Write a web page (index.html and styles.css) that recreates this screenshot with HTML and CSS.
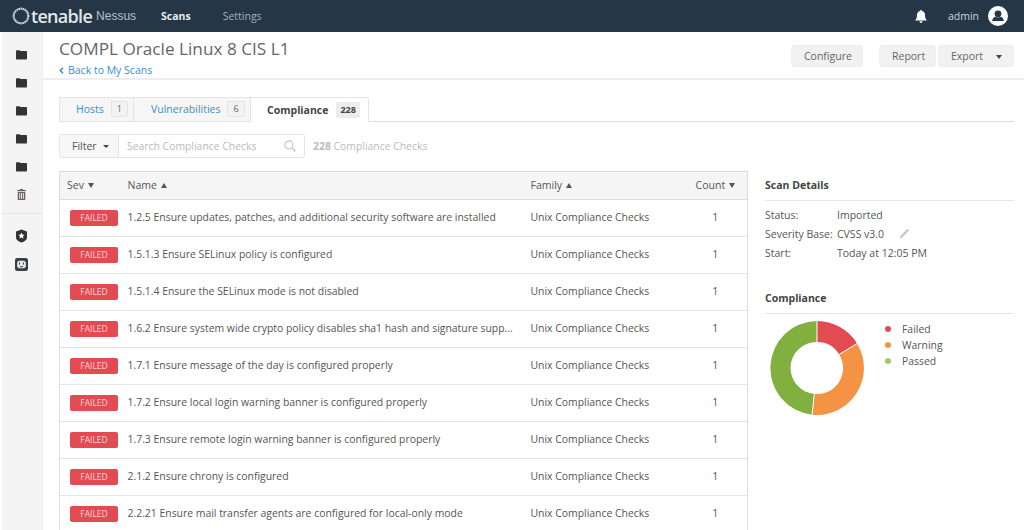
FILE: index.html
```html
<!DOCTYPE html>
<html lang="en">
<head>
	<meta charset="UTF-8">
	<title>Nessus - COMPL Oracle Linux 8 CIS L1</title>
	<link rel="stylesheet" href="styles.css">
</head>
<body>
<header class="topbar">
	<div class="logo">
		<svg class="logo-ring" width="18" height="18" viewBox="0 0 18 18"><circle cx="9" cy="9" r="7.300" fill="none" stroke="#d5dade" stroke-width="2.200" stroke-dasharray="1.600 .5"/></svg>
		<span class="logo-word">tenable</span>
		<span class="logo-prod">Nessus</span>
	</div>
	<nav class="topnav">
		<a class="topnav-on">Scans</a>
		<a>Settings</a>
	</nav>
	<div class="topright">
		<svg class="bell" width="12" height="13" viewBox="0 0 12 13"><path d="M6 0c.6 0 1 .4 1 1 2 .4 3 2 3 4 0 3 .6 4 2 5.500H0C1.400 9 2 8 2 5c0-2 1-3.600 3-4 0-.6.400-1 1-1zM4.500 11.300h3C7.500 12.300 6.800 13 6 13s-1.500-.7-1.500-1.700z" fill="#fff"/></svg>
		<span class="username">admin</span>
		<svg class="avatar" width="20" height="20" viewBox="0 0 20 20"><circle cx="10" cy="10" r="10" fill="#fff"/><circle cx="10" cy="7.800" r="3.400" fill="#253746"/><path d="M4.200 15c0-2.800 2-4 3.500-4.200.7.500 1.500.8 2.300.8s1.600-.3 2.300-.8c1.500.2 3.500 1.400 3.500 4.200z" fill="#253746"/></svg>
	</div>
</header>
<div class="shell">
	<aside class="sidebar">
		<div class="side-group">
			<svg class="side-ico" viewBox="0 0 11 10"><path d="M0 1.500C0 1 .4.700 1 .7h2.600l.8.900H10c.6 0 1 .4 1 .9V9c0 .6-.4 1-1 1H1c-.6 0-1-.4-1-1z" fill="#333"/></svg>
			<svg class="side-ico" viewBox="0 0 11 10"><path d="M0 1.500C0 1 .4.700 1 .7h2.600l.8.900H10c.6 0 1 .4 1 .9V9c0 .6-.4 1-1 1H1c-.6 0-1-.4-1-1z" fill="#333"/></svg>
			<svg class="side-ico" viewBox="0 0 11 10"><path d="M0 1.500C0 1 .4.700 1 .7h2.600l.8.900H10c.6 0 1 .4 1 .9V9c0 .6-.4 1-1 1H1c-.6 0-1-.4-1-1z" fill="#333"/></svg>
			<svg class="side-ico" viewBox="0 0 11 10"><path d="M0 1.500C0 1 .4.700 1 .7h2.600l.8.900H10c.6 0 1 .4 1 .9V9c0 .6-.4 1-1 1H1c-.6 0-1-.4-1-1z" fill="#333"/></svg>
			<svg class="side-ico" viewBox="0 0 11 10"><path d="M0 1.500C0 1 .4.700 1 .7h2.600l.8.900H10c.6 0 1 .4 1 .9V9c0 .6-.4 1-1 1H1c-.6 0-1-.4-1-1z" fill="#333"/></svg>
			<svg class="side-ico" viewBox="0 0 9 11"><path d="M3 0h3l.5 1H9v1H0V1h2.500zM.7 2.800h7.600V10c0 .6-.4 1-1 1H1.700c-.6 0-1-.4-1-1zm1.600 1.200v5.800h.9V4zm1.800 0v5.800h.9V4zm1.800 0v5.800h.9V4z" fill="#6b6461"/></svg>
		</div>
		<div class="side-group side-group-low">
			<svg class="side-ico side-ico-shield" viewBox="0 0 11 13"><path d="M5.500 0L11 2v6c0 2.500-2.500 4-5.500 5C2.500 12 0 10.500 0 8V2z" fill="#333"/><path d="M5.500 3.200l.9 1.900 2.100.3-1.500 1.400.4 2.100-1.900-1-1.900 1 .4-2.100-1.500-1.400 2.100-.3z" fill="#fff"/></svg>
			<svg class="side-ico side-ico-plug" viewBox="0 0 12 12"><rect width="12" height="12" rx="2" fill="#3a3f45"/><path d="M3.500 2.500h5L10 4v4L8.500 9.500h-5L2 8V4z" fill="#e8e8e8"/><path d="M4.200 4.200v1.800M7.800 4.200v1.800M4.500 8h3" stroke="#3a3f45" stroke-width="1"/></svg>
		</div>
	</aside>
	<main class="main">
		<div class="pagehead">
			<div>
				<h1 class="pagetitle">COMPL Oracle Linux 8 CIS L1</h1>
				<a class="backlink"><svg class="backlink-arrow" width="5" height="7" viewBox="0 0 5 7"><path d="M4 .8L1.300 3.500 4 6.200" fill="none" stroke="#3a8fc9" stroke-width="1.500"/></svg>Back to My Scans</a>
			</div>
			<div class="pageactions">
				<button class="btn btn-configure">Configure</button>
				<button class="btn btn-report">Report</button>
				<button class="btn btn-export">Export <i class="caret"></i></button>
			</div>
		</div>
		<div class="content">
			<div class="tabs">
				<a class="tab tab-hosts">Hosts <span class="tabcount">1</span></a>
				<a class="tab tab-vulns">Vulnerabilities <span class="tabcount">6</span></a>
				<a class="tab tab-on">Compliance <span class="tabcount">228</span></a>
			</div>
			<div class="filterbar">
				<div class="filterbtn">Filter <i class="caret"></i></div>
				<div class="searchbox">
					<span>Search Compliance Checks</span>
					<svg width="12" height="12" viewBox="0 0 13 13"><circle cx="5.300" cy="5.300" r="4.300" fill="none" stroke="#c4c4c4" stroke-width="1.200"/><path d="M8.500 8.500L12.300 12.300" stroke="#c4c4c4" stroke-width="1.600"/></svg>
				</div>
				<div class="resultcount"><b>228</b> Compliance Checks</div>
			</div>
			<div class="columns">
				<table class="checks">
					<thead>
						<tr>
							<th class="col-sev">Sev <i class="sort sort-down"></i></th>
							<th class="col-name">Name <i class="sort sort-up"></i></th>
							<th class="col-family">Family <i class="sort sort-up"></i></th>
							<th class="col-count">Count <i class="sort sort-down"></i></th>
						</tr>
					</thead>
					<tbody>
						<tr><td><span class="failed">FAILED</span></td><td class="name">1.2.5 Ensure updates, patches, and additional security software are installed</td><td class="name">Unix Compliance Checks</td><td class="num">1</td></tr>
						<tr><td><span class="failed">FAILED</span></td><td class="name">1.5.1.3 Ensure SELinux policy is configured</td><td class="name">Unix Compliance Checks</td><td class="num">1</td></tr>
						<tr><td><span class="failed">FAILED</span></td><td class="name">1.5.1.4 Ensure the SELinux mode is not disabled</td><td class="name">Unix Compliance Checks</td><td class="num">1</td></tr>
						<tr><td><span class="failed">FAILED</span></td><td class="name">1.6.2 Ensure system wide crypto policy disables sha1 hash and signature supp...</td><td class="name">Unix Compliance Checks</td><td class="num">1</td></tr>
						<tr><td><span class="failed">FAILED</span></td><td class="name">1.7.1 Ensure message of the day is configured properly</td><td class="name">Unix Compliance Checks</td><td class="num">1</td></tr>
						<tr><td><span class="failed">FAILED</span></td><td class="name">1.7.2 Ensure local login warning banner is configured properly</td><td class="name">Unix Compliance Checks</td><td class="num">1</td></tr>
						<tr><td><span class="failed">FAILED</span></td><td class="name">1.7.3 Ensure remote login warning banner is configured properly</td><td class="name">Unix Compliance Checks</td><td class="num">1</td></tr>
						<tr><td><span class="failed">FAILED</span></td><td class="name">2.1.2 Ensure chrony is configured</td><td class="name">Unix Compliance Checks</td><td class="num">1</td></tr>
						<tr><td><span class="failed">FAILED</span></td><td class="name">2.2.21 Ensure mail transfer agents are configured for local-only mode</td><td class="name">Unix Compliance Checks</td><td class="num">1</td></tr>
					</tbody>
				</table>
				<section class="details">
					<h2 class="details-title">Scan Details</h2>
					<dl class="details-list">
						<dt>Status:</dt><dd>Imported</dd>
						<dt>Severity Base:</dt><dd>CVSS v3.0 <svg class="pencil" width="11" height="11" viewBox="0 0 11 11"><path d="M8.500.8l1.700 1.700L3 9.700.6 10.400 1.300 8z" fill="#c9c9c9"/></svg></dd>
						<dt>Start:</dt><dd>Today at 12:05 PM</dd>
					</dl>
					<h2 class="details-title details-title-2">Compliance</h2>
					<div class="chartrow">
						<svg class="donut" width="96" height="96" viewBox="-48 -48 96 96">
							<path d="M0-47A47 47 0 0 1 40.100-24.500L22.200-13.600A26 26 0 0 0 0-26z" fill="#e34b53"/>
							<path d="M40.100-24.500A47 47 0 0 1-4.900 46.700L-2.700 25.900A26 26 0 0 0 22.200-13.600z" fill="#f39343"/>
							<path d="M-4.900 46.700A47 47 0 0 1 0-47V-26A26 26 0 0 0-2.700 25.900z" fill="#81b03f"/>
							<path d="M0-47V-26M40.100-24.500L22.200-13.600M-4.900 46.700L-2.700 25.900" stroke="#fff" stroke-width="1"/>
						</svg>
						<ul class="legend">
							<li><i class="dot dot-red"></i>Failed</li>
							<li><i class="dot dot-orange"></i>Warning</li>
							<li><i class="dot dot-green"></i>Passed</li>
						</ul>
					</div>
				</section>
			</div>
		</div>
	</main>
</div>
</body>
</html>
```

FILE: styles.css
```css
*{box-sizing:border-box;margin:0;padding:0;}
html,body{height:530px;overflow:hidden;}
body{background:#fff;color:#555;font-family:"Open Sans",Arial,sans-serif;font-size:11px;}
a{color:inherit;text-decoration:none;}
ul{list-style:none;}

.topbar{display:flex;align-items:center;height:32px;background:#253746;color:#d0d5da;}
.logo{display:flex;align-items:center;width:161px;padding-left:12px;}
.logo-ring{margin-right:1px;}
.logo-word{font-size:18px;font-weight:600;letter-spacing:-.7px;color:#e4e7ea;line-height:32px;}
.logo-prod{font-size:12px;margin-left:4px;color:#b8c0c7;font-family:"Liberation Sans",Arial,sans-serif;}
.topnav{display:flex;gap:32px;font-size:10.500px;color:#a5adb5;}
.topnav-on{font-weight:700;color:#e8ebee;}
.topright{display:flex;align-items:center;margin-left:auto;padding-right:16px;}
.bell{margin-right:21px;}
.username{margin-right:9px;font-size:10.500px;color:#d0d5da;}

.shell{display:flex;height:498px;}
.sidebar{flex:none;width:41px;margin-left:2px;background:#f4f4f4;border-right:1px solid #eee;}
.side-group{display:flex;flex-direction:column;align-items:center;gap:17px;padding-top:17px;padding-bottom:13px;padding-right:2px;border-bottom:1px solid #e4e4e4;}
.side-group-low{border-bottom:none;padding-top:15px;gap:15px;}
.side-ico{width:11px;height:11px;}
.side-ico-shield{height:14px;}
.side-ico-plug{width:13px;height:13px;}

.main{flex:1;min-width:0;}
.pagehead{display:flex;justify-content:space-between;height:48px;padding:5px 10px 0 16px;border-bottom:2px solid #eee;}
.pagetitle{font-size:17.200px;font-weight:400;line-height:24px;color:#666;}
.backlink{display:flex;align-items:center;gap:4px;margin-top:2px;font-size:10.500px;line-height:15px;color:#3a8fc9;}
.pageactions{display:flex;gap:2px;padding-top:8px;}
.btn{height:22px;padding:0 12px;border:1px solid #eee;border-radius:3px;background:#f1f1f1;color:#666;font:10.500px "Open Sans",Arial,sans-serif;white-space:nowrap;}
.btn-configure{margin-right:14px;width:72px;}
.btn-report{width:57px;}
.btn-export{width:76px;text-align:left;}
.btn-export .caret{margin-left:10px;}
.caret{display:inline-block;vertical-align:middle;width:0;height:0;border:3.500px solid transparent;border-top:4px solid #444;border-bottom:0;}

.content{padding:17px 10px 0 16px;}
.tabs{display:flex;height:25px;border-bottom:1px solid #ddd;}
.tab{display:flex;align-items:center;height:25px;padding-bottom:1px;border:1px solid #e4e4e4;border-left:none;background:#f6f6f6;color:#3a8fc9;font-size:10.500px;}
.tab-hosts{width:75px;padding-left:16px;border-left:1px solid #e4e4e4;}
.tab-vulns{width:117px;padding-left:17px;}
.tab-on{width:118px;padding-left:16px;border-bottom:none;border-radius:0 3px 0 0;background:#fff;color:#444;font-weight:700;}
.tabcount{display:inline-block;margin-left:7px;padding:0 5px;border:1px solid #e4e4e4;border-radius:2px;background:#f2f2f2;color:#666;font-size:9px;font-weight:400;line-height:14px;}
.tab-on .tabcount{margin-left:8px;padding:1px 4px;border:none;background:#ececec;color:#444;font-weight:700;}

.filterbar{display:flex;align-items:center;margin-top:12px;}
.filterbtn{display:flex;align-items:center;gap:6px;width:60px;height:24px;padding-left:12px;border:1px solid #e4e4e4;border-radius:3px 0 0 3px;background:#f7f7f7;color:#555;font-size:10.500px;}
.filterbtn .caret{border-width:3px;border-top-width:3.500px;}
.searchbox{display:flex;align-items:center;justify-content:space-between;width:186px;height:24px;padding:0 8px;border:1px solid #e4e4e4;border-left:none;border-radius:0 3px 3px 0;color:#bbb;font-size:10.400px;}
.resultcount{margin-left:8px;color:#bbb;font-size:10.400px;}

.columns{display:flex;align-items:flex-start;gap:17px;margin-top:13px;}
.checks{width:689px;flex:none;border-collapse:collapse;table-layout:fixed;border:1px solid #ddd;}
.checks th{height:28px;background:#f5f5f5;border-bottom:1px solid #ddd;padding:0 8px 2px;font-size:10.500px;font-weight:400;text-align:left;color:#555;}
.checks td{height:37px;border-bottom:1px solid #e4e4e4;padding:0 8px;font-size:10.500px;color:#555;white-space:nowrap;overflow:hidden;}
.checks .name{padding-bottom:2px;font-size:10.420px;}
.checks .col-sev{width:60px;padding-left:7px;}
.col-name{width:403px;}
.col-family{width:161px;}
.checks .col-count{text-align:center;padding:0 0 2px;}
.checks .num{text-align:center;padding-bottom:2px;}
.sort{display:inline-block;vertical-align:1px;width:0;height:0;margin-left:1px;border:3px solid transparent;}
.sort-down{border-top:5px solid #555;border-bottom:0;}
.sort-up{border-bottom:5px solid #555;border-top:0;}
.failed{display:block;width:48px;height:16px;margin-left:2px;border-radius:2px;background:#e34b53;color:#f7d4d6;font-size:8.500px;line-height:16px;text-align:center;}

.details{flex:1;min-width:0;padding-top:7px;}
.details-title{padding-bottom:7px;border-bottom:1px solid #e6e6e6;font-size:10.500px;font-weight:700;color:#444;line-height:15px;}
.details-title-2{margin-top:30px;}
.details-list{display:grid;grid-template-columns:72px 1fr;row-gap:4px;margin-top:7px;font-size:10.500px;line-height:15px;}
.pencil{margin-left:12px;vertical-align:-1px;}
.chartrow{display:flex;align-items:flex-start;margin-top:6px;}
.donut{flex:none;margin-left:4px;}
.legend{margin-left:20px;padding-top:1px;font-size:10.400px;line-height:16px;}
.legend li{display:flex;align-items:center;}
.dot{width:6px;height:6px;margin-right:11px;border-radius:50%;}
.dot-red{background:#e34b53;}
.dot-orange{background:#f39343;}
.dot-green{background:#a5c96a;}
```
